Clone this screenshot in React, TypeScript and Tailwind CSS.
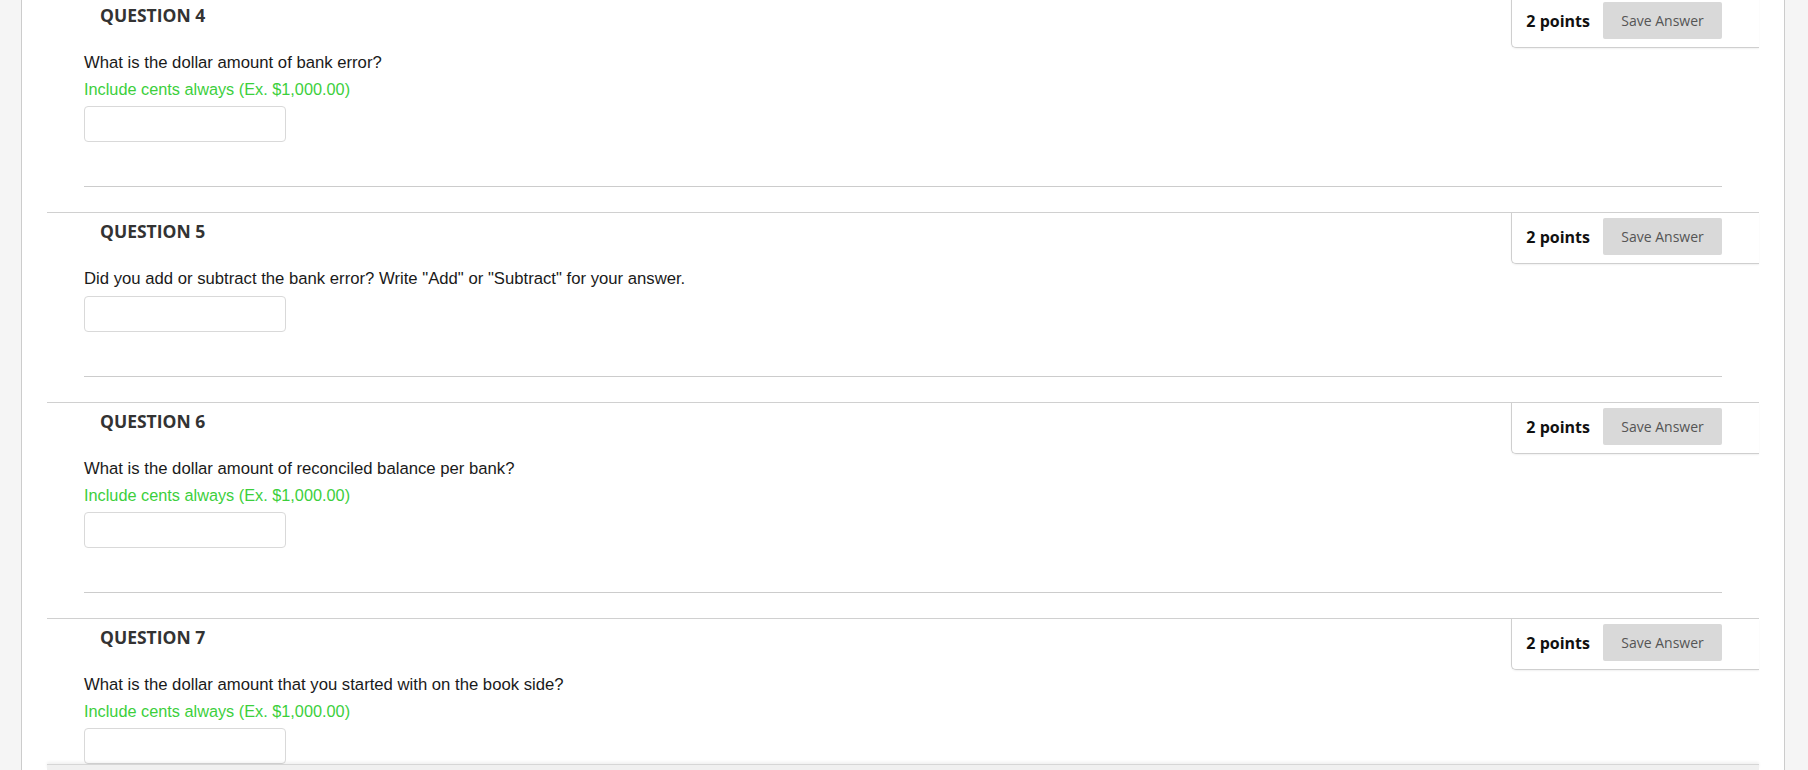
type Question = {
  num: number
  text: string
  hint?: string
}

const questions: Question[] = [
  { num: 4, text: 'What is the dollar amount of bank error?', hint: 'Include cents always (Ex. $1,000.00)' },
  { num: 5, text: 'Did you add or subtract the bank error? Write "Add" or "Subtract" for your answer.' },
  {
    num: 6,
    text: 'What is the dollar amount of reconciled balance per bank?',
    hint: 'Include cents always (Ex. $1,000.00)'
  },
  {
    num: 7,
    text: 'What is the dollar amount that you started with on the book side?',
    hint: 'Include cents always (Ex. $1,000.00)'
  }
]

function PointsBox() {
  return (
    <div className="flex items-center gap-[13px] rounded-bl-[5px] border-b border-l border-[#cfcfcf] bg-white pb-[8px] pl-[14px] pr-[37px] pt-[5px] shadow-[0_1px_2px_rgba(0,0,0,0.06)]">
      <span className="font-['Open_Sans',sans-serif] text-[16px] font-bold leading-[22px] text-[#111]">2 points</span>
      <button className="h-[37px] w-[119px] rounded-[2px] bg-[#d9d9d9] font-['Open_Sans',sans-serif] text-[14px] text-[#555]">
        Save Answer
      </button>
    </div>
  )
}

function QuestionBlock({ q }: { q: Question }) {
  return (
    <section className="border-t border-[#d0d0d0]">
      <div className="flex items-start justify-between">
        <h2 className="pl-[53px] pt-[6px] font-['Open_Sans',sans-serif] text-[17.5px] font-bold leading-[24px] text-[#333]">
          QUESTION {q.num}
        </h2>
        <PointsBox />
      </div>
      <div className="px-[37px] pb-[25px] font-['Liberation_Sans',Arial,sans-serif] leading-[26px]">
        <p className="mt-[2px] text-[16.7px] text-[#1a1a1a]">{q.text}</p>
        {q.hint && <p className="text-[16.3px] text-[#3ccf3c]">{q.hint}</p>}
        <input
          type="text"
          className="mt-[4px] block h-[36px] w-[202px] rounded-[4px] border border-[#d9d9d9] bg-white"
        />
        <div className="mt-[44px] border-t border-[#cccccc]" />
      </div>
    </section>
  )
}

export default function App() {
  return (
    <div className="flex h-[770px] w-[1808px] overflow-hidden bg-[#f5f5f5]">
      <div className="ml-[21px] flex h-full w-[1764px] flex-col border-x border-[#cccccc] bg-white">
        <div className="flex-1 overflow-hidden px-[25px]">
          <div className="-mt-[4px]">
            {questions.map((q) => (
              <QuestionBlock key={q.num} q={q} />
            ))}
          </div>
        </div>
        <div className="mx-[25px] h-[6px] shrink-0 border-t border-[#d6d6d6] bg-[#f0f0f0] shadow-[0_-2px_3px_rgba(0,0,0,0.06)]" />
      </div>
    </div>
  )
}
